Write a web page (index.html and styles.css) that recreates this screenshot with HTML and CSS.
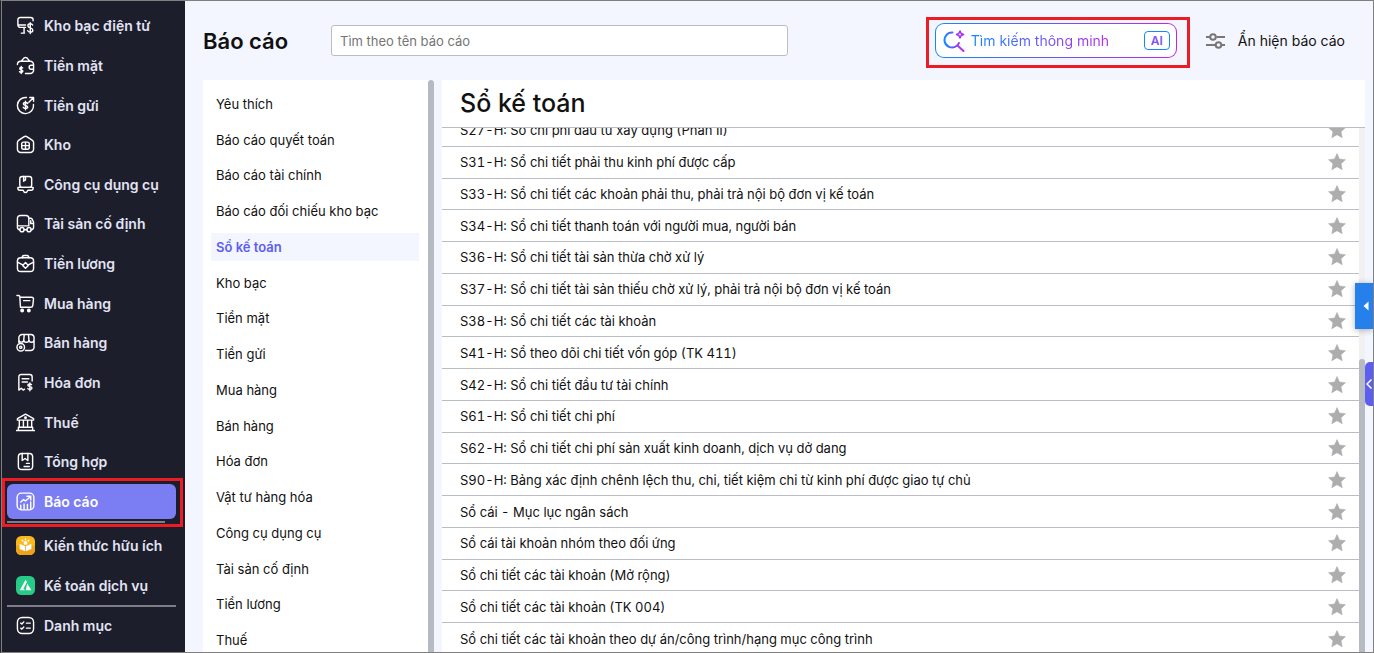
FILE: index.html
```html
<!DOCTYPE html>
<html lang="vi">
<head>
    <meta charset="UTF-8">
    <meta name="viewport" content="width=device-width, initial-scale=1.0">
    <title>Báo cáo</title>
    <link rel="stylesheet" href="styles.css">
</head>
<body>
    <svg class="sprite" aria-hidden="true">
        <symbol id="star" viewBox="0 0 18 18">
            <path d="M9 .6l2.400 5.400 6 .7-4.400 4 1.200 6L9 13.700l-5.200 3 1.200-6-4.400-4 6-.7z" fill="#adadad" stroke="#adadad" stroke-width=".6" stroke-linejoin="round"/>
        </symbol>
    </svg>

    <nav id="sidebar">
        <a href="#"><svg viewBox="0 0 20 20"><path d="M18 5V4a2.500 2.500 0 0 0-2.500-2.500h-11A2.500 2.500 0 0 0 2 4v5.500A2.500 2.500 0 0 0 4.500 12H10M2 9.500h8M8.500 12v6M5.500 18H9M17.500 9.500c-.5-1-1.300-1.300-2.500-1.300-1.500 0-2.500.8-2.500 2.100 0 3 5.200 1.500 5.200 4.600 0 1.400-1.200 2.100-2.700 2.100-1.400 0-2.300-.5-2.700-1.600M15 7v11.500"/></svg>Kho bạc điện tử</a>
        <a href="#"><svg viewBox="0 0 20 20"><path d="M5.500 5.500l3-3.500q1.500-1 3 0l3 3.500M1.500 9a3.500 3.500 0 0 1 3.500-3.500h10A3.500 3.500 0 0 1 18.500 9v6a3.500 3.500 0 0 1-3.500 3.500h-5M18.500 9.700H16a2 2 0 0 0 0 4.300h2.500M7 12.500c-.5-.7-3-.8-3 .8 0 1.700 3.200.9 3.200 2.700 0 1.600-3 1.500-3.500.5M5.500 11v7.500"/></svg>Tiền mặt</a>
        <a href="#"><svg viewBox="0 0 20 20"><path d="M11 1.600A8.500 8.500 0 1 0 18.400 9M13.500 6.500l5-5M14.500 1.500h4v4M12.300 8c-.4-.8-1-1.100-2.300-1.100-1.300 0-2.200.5-2.200 1.500 0 2 4.500 1.100 4.500 3.200 0 1-1 1.500-2.300 1.500-1.300 0-2-.4-2.400-1.200M10 5.500v9"/></svg>Tiền gửi</a>
        <a href="#"><svg viewBox="0 0 20 20"><path d="M1.500 8q0-1.500 1.200-2.300l5.500-3.800q1.800-1 3.600 0l5.500 3.800Q18.500 6.500 18.500 8v7a3.500 3.500 0 0 1-3.500 3.500H5A3.500 3.500 0 0 1 1.500 15z"/><rect x="6" y="7.500" width="8" height="7.500" rx="2"/><path d="M10 7.500V15M6 11.200h8"/></svg>Kho</a>
        <a href="#"><svg viewBox="0 0 20 20"><rect x="4" y="1.500" width="12.500" height="11.500" rx="2.500"/><path d="M8 1.500v5l2-1.300V2M2 13h16v1a2 2 0 0 1-2 2h-3.500c-.6 1.500-1.300 2.500-2.500 2.500S8 17.500 7.500 16H4a2 2 0 0 1-2-2z"/></svg>Công cụ dụng cụ</a>
        <a href="#"><svg viewBox="0 0 20 20"><path d="M4 16.500a2.500 2.500 0 0 1-2.500-2.500V4.500A3 3 0 0 1 4.500 1.500h6a3 3 0 0 1 3 3v8h-12M13.500 4.500h1.700q1.300 0 2 1.200l1.300 3V14a2.500 2.500 0 0 1-2.500 2.500M18 10h-2.500V7M8.500 16.500h3"/><circle cx="6.300" cy="16.500" r="2.200"/><circle cx="13.700" cy="16.500" r="2.200"/></svg>Tài sản cố định</a>
        <a href="#"><svg viewBox="0 0 20 20"><rect x="1.500" y="4" width="17" height="14.500" rx="3.500"/><path d="M6.500 4c0-1.700.6-2.500 2-2.500h3c1.400 0 2 .8 2 2.500M1.500 8.500l5.500 3M18.500 8.500l-5.500 3M10 9l3 3-3 3-3-3z"/></svg>Tiền lương</a>
        <a href="#"><svg viewBox="0 0 20 20"><path d="M1 1.500h1.800q1.200 0 1.200 1.200L4.700 14h10.800q2 0 2.200-2l.7-6.500q.1-2-2-2H4.200M8 7h6.500"/><circle cx="6.500" cy="17.300" r="1.300" fill="#fff"/><circle cx="13.500" cy="17.300" r="1.300" fill="#fff"/></svg>Mua hàng</a>
        <a href="#"><svg viewBox="0 0 20 20"><path d="M3 10V5a3.500 3.500 0 0 1 3.500-3.500h9A3.500 3.500 0 0 1 19 5v10a3.500 3.500 0 0 1-3.500 3.500H10M3 7a2.600 2.600 0 0 0 5.200 0 2.600 2.600 0 0 0 5.400 0A2.600 2.600 0 0 0 19 7M8.200 7l.5-5.500M13.600 7l-.5-5.500"/><circle cx="5" cy="15" r="4"/><circle cx="5" cy="15" r="1.200"/></svg>Bán hàng</a>
        <a href="#"><svg viewBox="0 0 20 20"><path d="M3 17.500V4a2.500 2.500 0 0 1 2.500-2.500h9A2.500 2.500 0 0 1 17 4v4.500M3 18l2.500-2 2 2 1.500-1M6.500 6h7M6.500 9.500h5.500M16.300 12.200c-.6-.9-3.800-1-3.800.7 0 2 4.300 1 4.300 3 0 1.800-3.600 1.600-4.300.5M14.600 10.500v8.200"/></svg>Hóa đơn</a>
        <a href="#"><svg viewBox="0 0 20 20"><path d="M1.500 7.500V6L10 1.200 18.500 6v1.500zM3.500 8v7M7.800 8v7M12.200 8v7M16.500 8v7M2.500 15h15v3.300h-15zM.5 18.500h19"/><circle cx="10" cy="5" r=".8"/></svg>Thuế</a>
        <a href="#"><svg viewBox="0 0 20 20"><rect x="2.500" y="1.500" width="15" height="17" rx="3.500"/><path d="M6.500 1.500V9L9.500 6.800l3 2.200V1.500M11 12h3M8.500 15.200H14"/></svg>Tổng hợp</a>
        <div class="marked">
            <a href="#" class="active"><svg viewBox="0 0 20 20"><rect x="1.200" y="1.200" width="17.600" height="17.600" rx="4.500"/><path d="M5 10.500L8 8l2 1.500L15 5M11.500 4.500h4v4M5 14v4M8.500 12.500V18M12 13v5M15.500 10.500V18"/></svg>Báo cáo</a>
        </div>
        <hr class="short">
        <a href="#"><svg class="tile" viewBox="0 0 20 20"><rect width="20" height="20" rx="5.500" fill="#f9b91b"/><path d="M0 10h20v4.500a5.500 5.500 0 0 1-5.500 5.500h-9A5.500 5.500 0 0 1 0 14.500z" fill="#eda315"/><path d="M3.800 8.500L9.600 10.500V16L3.800 13.800zM16.200 8.500L10.400 10.500V16l5.800-2.200z" fill="#fff"/><circle cx="10" cy="7.300" r="2" fill="#fff"/><path d="M10 3v1M6.500 4.500l.7.700M13.500 4.500l-.7.700" stroke="#fff"/></svg>Kiến thức hữu ích</a>
        <a href="#"><svg class="tile" viewBox="0 0 20 20"><rect width="20" height="20" rx="5.500" fill="#27cb88"/><path d="M4 15L10 4l1.500 2.300-3.800 7L9.800 15zM11.800 8l4.500 7h-6z" fill="#fff"/></svg>Kế toán dịch vụ</a>
        <hr>
        <a href="#"><svg viewBox="0 0 20 20"><rect x="1.500" y="1.500" width="17" height="17" rx="5"/><path d="M5 7.500l1.200 1 2-2.300M11 7.500h4M5 12.800l1.200 1 2-2.300M11 12.800h4"/></svg>Danh mục</a>
    </nav>

    <main id="content">
        <header>
            <h1>Báo cáo</h1>
            <input type="text" class="search" placeholder="Tìm theo tên báo cáo" aria-label="Tìm theo tên báo cáo">
            <div class="smart marked">
                <button type="button" class="smart-search">
                    <svg viewBox="0 0 22 22">
                        <defs>
                            <linearGradient id="smart-gradient" gradientUnits="userSpaceOnUse" x1="0" y1="0" x2="22" y2="0">
                                <stop offset=".1" stop-color="#1687ff"/>
                                <stop offset=".85" stop-color="#b92af0"/>
                            </linearGradient>
                        </defs>
                        <g fill="none" stroke="url(#smart-gradient)" stroke-linecap="round" stroke-linejoin="round">
                            <path d="M9.500 2.500a7.500 7.500 0 1 0 4 13.500q1.800-1.200 2.400-3M14.500 15.500l6 5.500" stroke-width="2"/>
                            <path d="M17 1l1.100 2.400 2.400 1.100-2.400 1.100L17 8l-1.100-2.400-2.400-1.100 2.400-1.100z" stroke-width="1.600"/>
                        </g>
                    </svg>
                    <span class="smart-label">Tìm kiếm thông minh</span>
                    <span class="ai">AI</span>
                </button>
            </div>
            <button type="button" class="toggle-reports">
                <svg viewBox="0 0 20 16"><path d="M0 4h4M10.500 4H19M0 12h9M15.500 12H19" /><circle cx="7" cy="4" r="2.800"/><circle cx="12.500" cy="12" r="2.800"/></svg>
                Ẩn hiện báo cáo
            </button>
        </header>

        <div class="panels">
            <section class="categories">
                <ul>
                    <li><a href="#">Yêu thích</a></li>
                    <li><a href="#">Báo cáo quyết toán</a></li>
                    <li><a href="#">Báo cáo tài chính</a></li>
                    <li><a href="#">Báo cáo đối chiếu kho bạc</a></li>
                    <li><a href="#" class="selected">Sổ kế toán</a></li>
                    <li><a href="#">Kho bạc</a></li>
                    <li><a href="#">Tiền mặt</a></li>
                    <li><a href="#">Tiền gửi</a></li>
                    <li><a href="#">Mua hàng</a></li>
                    <li><a href="#">Bán hàng</a></li>
                    <li><a href="#">Hóa đơn</a></li>
                    <li><a href="#">Vật tư hàng hóa</a></li>
                    <li><a href="#">Công cụ dụng cụ</a></li>
                    <li><a href="#">Tài sản cố định</a></li>
                    <li><a href="#">Tiền lương</a></li>
                    <li><a href="#">Thuế</a></li>
                </ul>
                <div class="scrollbar"><div class="thumb"></div></div>
            </section>

            <section class="reports">
                <h2>Sổ kế toán</h2>
                <div class="report-body">
                    <ul>
                        <li><a href="#">S27-H: Sổ chi phí đầu tư xây dựng (Phần II)</a><button type="button" aria-label="Yêu thích"><svg><use href="#star"/></svg></button></li>
                        <li><a href="#">S31-H: Sổ chi tiết phải thu kinh phí được cấp</a><button type="button" aria-label="Yêu thích"><svg><use href="#star"/></svg></button></li>
                        <li><a href="#">S33-H: Sổ chi tiết các khoản phải thu, phải trả nội bộ đơn vị kế toán</a><button type="button" aria-label="Yêu thích"><svg><use href="#star"/></svg></button></li>
                        <li><a href="#">S34-H: Sổ chi tiết thanh toán với người mua, người bán</a><button type="button" aria-label="Yêu thích"><svg><use href="#star"/></svg></button></li>
                        <li><a href="#">S36-H: Sổ chi tiết tài sản thừa chờ xử lý</a><button type="button" aria-label="Yêu thích"><svg><use href="#star"/></svg></button></li>
                        <li><a href="#">S37-H: Sổ chi tiết tài sản thiếu chờ xử lý, phải trả nội bộ đơn vị kế toán</a><button type="button" aria-label="Yêu thích"><svg><use href="#star"/></svg></button></li>
                        <li><a href="#">S38-H: Sổ chi tiết các tài khoản</a><button type="button" aria-label="Yêu thích"><svg><use href="#star"/></svg></button></li>
                        <li><a href="#">S41-H: Sổ theo dõi chi tiết vốn góp (TK 411)</a><button type="button" aria-label="Yêu thích"><svg><use href="#star"/></svg></button></li>
                        <li><a href="#">S42-H: Sổ chi tiết đầu tư tài chính</a><button type="button" aria-label="Yêu thích"><svg><use href="#star"/></svg></button></li>
                        <li><a href="#">S61-H: Sổ chi tiết chi phí</a><button type="button" aria-label="Yêu thích"><svg><use href="#star"/></svg></button></li>
                        <li><a href="#">S62-H: Sổ chi tiết chi phí sản xuất kinh doanh, dịch vụ dở dang</a><button type="button" aria-label="Yêu thích"><svg><use href="#star"/></svg></button></li>
                        <li><a href="#">S90-H: Bảng xác định chênh lệch thu, chi, tiết kiệm chi từ kinh phí được giao tự chủ</a><button type="button" aria-label="Yêu thích"><svg><use href="#star"/></svg></button></li>
                        <li><a href="#">Sổ cái - Mục lục ngân sách</a><button type="button" aria-label="Yêu thích"><svg><use href="#star"/></svg></button></li>
                        <li><a href="#">Sổ cái tài khoản nhóm theo đối ứng</a><button type="button" aria-label="Yêu thích"><svg><use href="#star"/></svg></button></li>
                        <li><a href="#">Sổ chi tiết các tài khoản (Mở rộng)</a><button type="button" aria-label="Yêu thích"><svg><use href="#star"/></svg></button></li>
                        <li><a href="#">Sổ chi tiết các tài khoản (TK 004)</a><button type="button" aria-label="Yêu thích"><svg><use href="#star"/></svg></button></li>
                        <li><a href="#">Sổ chi tiết các tài khoản theo dự án/công trình/hạng mục công trình</a><button type="button" aria-label="Yêu thích"><svg><use href="#star"/></svg></button></li>
                    </ul>
                    <div class="scrollbar track"><div class="thumb"></div></div>
                </div>
            </section>
        </div>
    </main>

    <button type="button" class="edge-tab blue" aria-label="Mở bảng trợ giúp"><svg viewBox="0 0 6 10"><path d="M5.500 .5v9L.5 5z" fill="#fff"/></svg></button>
    <button type="button" class="edge-tab purple" aria-label="Mở rộng"><svg viewBox="0 0 6 10"><path d="M5.500 .5L1 5l4.500 4.500" fill="none" stroke="#fff" stroke-width="1.500"/></svg></button>
</body>
</html>
```

FILE: styles.css
```css
* {
    margin: 0;
    padding: 0;
    box-sizing: border-box;
}

body {
    display: flex;
    position: relative;
    height: 100vh;
    padding-left: 1px;
    overflow: hidden;
    border: 1px solid #808080;
    border-left-color: #1d1e2c;
    background-color: #f3f5ff;
    color: #111;
    font-family: Inter, "Liberation Sans", sans-serif;
    font-size: 13px;
}

a {
    color: inherit;
    text-decoration: none;
}

ul {
    list-style: none;
}

button {
    border: none;
    background: none;
    font: inherit;
    color: inherit;
    cursor: pointer;
}

.sprite {
    position: absolute;
    width: 0;
    height: 0;
}

/* Red frame around the highlighted controls */
.marked {
    position: relative;
}

.marked::after {
    content: "";
    position: absolute;
    border: 3px solid #ec1c24;
    pointer-events: none;
}

/* Sidebar */
#sidebar {
    display: flex;
    flex-direction: column;
    flex: none;
    width: 184px;
    margin-left: -1px;
    padding: 5px 9px 7px 5px;
    border-left: 1px solid #808080;
    background-color: #1d1e2c;
    color: #e2e4f4;
    font-size: 14px;
    font-weight: 600;
}

#sidebar > a, #sidebar .marked {
    flex: 1;
    min-height: 24px;
}

#sidebar a {
    display: flex;
    align-items: center;
    gap: 9px;
    padding-left: 9px;
    white-space: nowrap;
}

#sidebar svg {
    flex: none;
    width: 19px;
    height: 19px;
    fill: none;
    stroke: #fff;
    stroke-width: 1.5;
    stroke-linecap: round;
    stroke-linejoin: round;
}

#sidebar svg.tile {
    stroke: none;
}

#sidebar .marked {
    display: flex;
}

#sidebar .marked::after {
    inset: -4px -7px -6px -5px;
}

#sidebar .active {
    flex: 1;
    margin: 2px 0;
    border-radius: 6px;
    background-color: #7b7df3;
    color: #fff;
}

#sidebar hr {
    height: 2px;
    margin-bottom: -2px;
    border: none;
    background-color: #7c7d89;
}

#sidebar hr.short {
    margin: 0 11px 3px 0;
}

/* Page header */
#content {
    display: flex;
    flex-direction: column;
    flex: 1;
    min-width: 0;
    padding: 0 8px 0 18px;
}

header {
    display: flex;
    align-items: center;
    flex: none;
    height: 79px;
    padding-right: 20px;
}

h1 {
    width: 128px;
    font-size: 22px;
    font-weight: 600;
}

.search {
    flex: 0 1 457px;
    height: 31px;
    padding: 0 8px;
    border: 1px solid #babcc8;
    border-radius: 3px;
    background-color: #fff;
    font: inherit;
}

.search::placeholder {
    color: #757575;
}

.smart {
    margin-left: auto;
}

.smart::after {
    inset: -6px -13px -10px -9px;
}

.smart-search {
    display: flex;
    align-items: center;
    width: 242px;
    height: 35px;
    padding: 0 6px 0 7px;
    border: 1px solid transparent;
    border-radius: 9px;
    background: linear-gradient(#fff, #fff) padding-box, linear-gradient(90deg, #1687ff, #c026e8) border-box;
}

.smart-search svg {
    width: 22px;
    height: 22px;
}

.smart-label {
    margin: 0 auto 0 6px;
    background: linear-gradient(90deg, #1687ff, #b92af0);
    background-clip: text;
    color: transparent;
    font-size: 14px;
}

.ai {
    width: 26px;
    border: 1px solid #1687ff;
    border-radius: 4px;
    color: #7a55f5;
    font-size: 12px;
    font-weight: 600;
    line-height: 17px;
}

.toggle-reports {
    display: flex;
    align-items: center;
    gap: 12px;
    margin-left: 29px;
    font-size: 14px;
}

.toggle-reports svg {
    width: 20px;
    height: 16px;
    fill: none;
    stroke: #777;
    stroke-width: 2;
}

/* Two panels */
.panels {
    display: flex;
    flex: 1;
    gap: 8px;
    min-height: 0;
}

.categories {
    display: flex;
    flex: 0 0 231px;
    background-color: #fff;
}

.categories ul {
    display: flex;
    flex-direction: column;
    flex: 1;
    margin-bottom: -6px;
    padding: 6px 9px 0 8px;
}

.categories li {
    display: flex;
    align-items: center;
    flex: 1;
}

.categories a {
    flex: 1;
    padding: 0 5px;
    line-height: 28px;
}

.categories .selected {
    background-color: #f3f5ff;
    color: #5d5ef0;
    font-weight: 600;
}

.scrollbar {
    display: flex;
    flex-direction: column;
    justify-content: flex-end;
    flex: none;
    width: 6px;
}

.thumb {
    height: 100%;
    border-radius: 3px 3px 0 0;
    background-color: #b6bac3;
}

.reports {
    display: flex;
    flex-direction: column;
    flex: 1;
    min-width: 0;
    background-color: #fff;
}

.reports h2 {
    height: 48px;
    padding-left: 18px;
    border-bottom: 1px solid #babcc8;
    font-size: 25px;
    font-weight: 500;
    line-height: 47px;
}

.report-body {
    display: flex;
    flex: 1;
    min-height: 0;
    overflow: hidden;
}

/* The list is scrolled, its first row is partly under the title */
.report-body ul {
    display: flex;
    flex-direction: column;
    flex: 1;
    margin: -13px 0 -3px;
    font-variant-numeric: tabular-nums;
}

.report-body li {
    display: flex;
    align-items: center;
    justify-content: space-between;
    flex: 1;
    padding: 0 13px 0 18px;
    border-bottom: 1px solid #babcc8;
}

.report-body button, .report-body button svg {
    display: block;
    width: 18px;
    height: 18px;
}

.track {
    background-color: #f1f1f1;
}

.track .thumb {
    height: 56%;
}

/* Tabs on the right edge of the window */
.edge-tab {
    display: flex;
    align-items: center;
    position: absolute;
    right: 0;
}

.edge-tab svg {
    width: 6px;
    height: 10px;
}

.blue {
    top: 282px;
    width: 18px;
    height: 46px;
    padding-left: 8px;
    background-color: #2680eb;
    box-shadow: 0 1px 6px rgba(0, 0, 0, 0.3);
}

.purple {
    top: 361px;
    width: 8px;
    height: 44px;
    padding-left: 1px;
    border-radius: 5px 0 0 5px;
    background-color: #5d5ef0;
}
```
